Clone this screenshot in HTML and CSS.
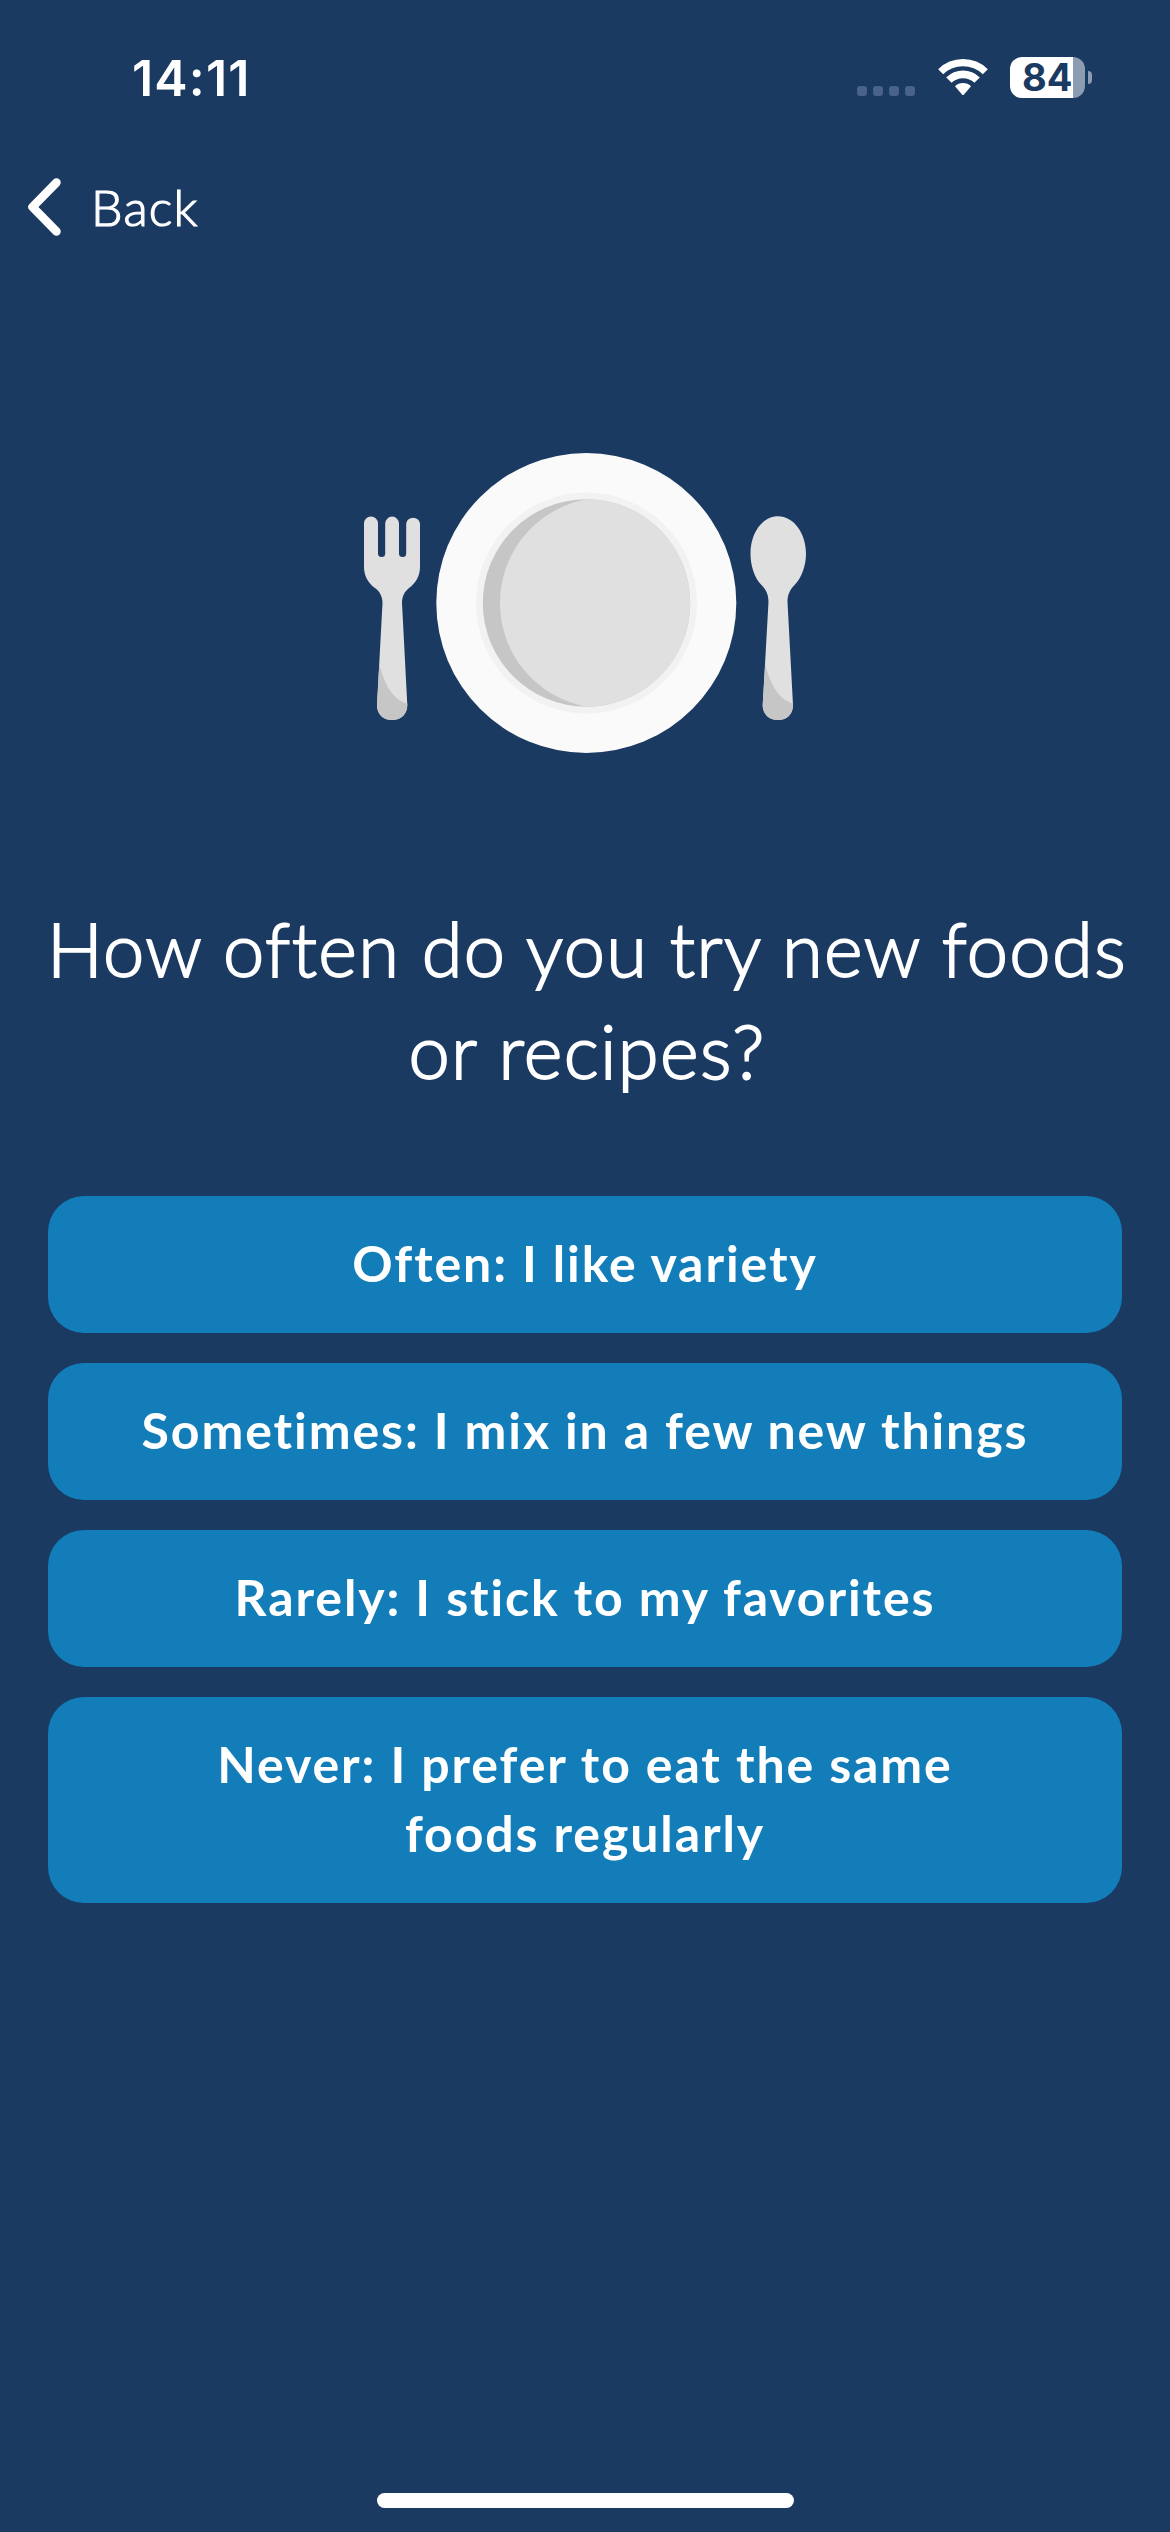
FILE: index.html
```html
<!DOCTYPE html>
<html lang="en">
<head>
  <meta charset="UTF-8" />
  <meta name="viewport" content="width=device-width, initial-scale=1.0" />
  <title>New Foods</title>
  <link rel="stylesheet" href="styles.css">
</head>
<body>
  <div class="status-bar">
    <span class="time">14:11</span>
    <div class="status-icons">
      <div class="signal"><i></i><i></i><i></i><i></i></div>
      <svg class="wifi" viewBox="0 0 52 38">
        <path d="M1.2 11.2 A35 35 0 0 1 50.8 11.2 L45.8 16.2 A28.5 28.5 0 0 0 6.2 16.2 Z" />
        <path d="M9.2 19.4 A24 24 0 0 1 42.8 19.4 L37.4 24.8 A16.4 16.4 0 0 0 14.6 24.800 Z" />
        <path d="M18 28.2 A11.4 11.4 0 0 1 34 28.2 L27 36.600 Q26 37.600 25 36.600 Z" />
      </svg>
      <div class="battery"><span>84</span></div>
      <div class="battery-tip"></div>
    </div>
  </div>

  <nav class="back">
    <svg viewBox="0 0 36 60">
      <path d="M30.5 5.5 L6.5 30 L30.5 54.5" />
    </svg>
    <span>Back</span>
  </nav>

  <main>
    <svg class="plate" viewBox="360 450 450 306">
      <!-- fork -->
      <path fill="#e0e0e0" d="M364 523.5 a7 7 0 0 1 14 0 V553.5 a3.6 3.6 0 0 0 7.2 0 V523.5 a6.9 6.9 0 0 1 13.8 0 V553.5 a3.6 3.6 0 0 0 7.2 0 V523.5 a7 7 0 0 1 13.8 0 V567 C420 576 415.5 583.5 409 588 C404.5 591.5 402 596.5 402 603 L407.3 705 C407.3 714 401 720 392 720 C383 720 377 714 377 705 L382.5 603 C382.5 596.5 379.5 591 375 588 C368.5 583.5 364 576 364 567 Z" />
      <path fill="#c6c6c6" d="M379.3 664 C384 684 393 700 407.3 703.5 V705 C407.3 714 401 720 392 720 C383 720 377 714 377 705 Z" />
      <!-- plate -->
      <circle cx="586.3" cy="603" r="150" fill="#fafafa" />
      <circle cx="586.5" cy="603" r="110.5" fill="#f2f2f2" />
      <circle cx="586.5" cy="603" r="103.7" fill="#c6c6c6" />
      <path fill="#e0e0e0" d="M586.5 499.3 A105.4 105.4 0 0 0 586.5 706.7 A103.7 103.7 0 0 0 586.5 499.3 Z" />
      <!-- spoon -->
      <path fill="#e0e0e0" d="M778 516.3 C793.5 516.3 806 533 806 553.5 C806 566 801.5 578 794.5 585 C790 589.5 787.5 594.5 787.5 602 L793 705 C793 714 787 720 778 720 C769 720 762.7 714 762.7 705 L768.5 602 C768.5 594.5 766 589.5 761.5 585 C754.5 578 750.5 566 750.5 553.5 C750.5 533 762.5 516.3 778 516.3 Z" />
      <path fill="#c6c6c6" d="M765.2 664 C770 684 779 700 793 703.5 V705 C793 714 787 720 778 720 C769 720 762.7 714 762.7 705 Z" />
    </svg>

    <h1>How often do you try new foods<br>or recipes?</h1>

    <div class="options">
      <button>Often: I like variety</button>
      <button>Sometimes: I mix in a few new things</button>
      <button>Rarely: I stick to my favorites</button>
      <button>Never: I prefer to eat the same<br>foods regularly</button>
    </div>
  </main>

  <div class="home-indicator"></div>
</body>
</html>
```
FILE: styles.css
```css
:root {
  --background-color: #1a3a62;
  --button-color: #127db9;
  --text-color: #ffffff;
}
* {
  margin: 0;
  padding: 0;
  box-sizing: border-box;
}
body {
  display: flex;
  flex-direction: column;
  height: 2532px;
  background-color: var(--background-color);
  color: var(--text-color);
  font-family: Lato, sans-serif;
}
.status-bar {
  display: flex;
  justify-content: space-between;
  height: 156px;
  padding: 57px 78px 0 132px;
}
.time {
  font-family: Inter, sans-serif;
  font-size: 50px;
  font-weight: 600;
  line-height: 42px;
  letter-spacing: 1.2px;
}
.status-icons {
  display: flex;
  height: 41px;
}
.signal {
  display: flex;
  gap: 6px;
  margin-top: 29px;
}
.signal i {
  width: 10px;
  height: 10px;
  border-radius: 3px;
  background: #48628a;
}
.wifi {
  width: 52px;
  height: 38px;
  margin: 1px 21px 0 22px;
  fill: var(--text-color);
}
.battery {
  width: 75px;
  height: 41px;
  padding-left: 12px;
  border-radius: 12px;
  background: linear-gradient(to right, #fff 63px, #8c9cb2 63px);
  color: var(--background-color);
  font-family: Inter, sans-serif;
  font-size: 38px;
  font-weight: 700;
  line-height: 41px;
}
.battery-tip {
  width: 4px;
  height: 13px;
  margin: 14px 0 0 3px;
  border-radius: 0 4px 4px 0;
  background: #8c9cb2;
}
.back {
  display: flex;
  align-items: center;
  height: 102px;
  padding-left: 26px;
  font-size: 50px;
  font-weight: 300;
  letter-spacing: 1.2px;
  -webkit-text-stroke: 1.2px var(--text-color);
}
.back svg {
  width: 36px;
  height: 60px;
  margin-right: 29px;
  fill: none;
  stroke: var(--text-color);
  stroke-width: 8.5;
  stroke-linecap: round;
  stroke-linejoin: round;
}
main {
  flex: 1;
  padding: 192px 48px 0;
}
.plate {
  display: block;
  width: 450px;
  height: 306px;
  margin: 0 auto;
}
h1 {
  margin: 142px -12px 0 -8px;
  font-size: 74px;
  font-weight: 300;
  line-height: 102px;
  letter-spacing: 1.35px;
  text-align: center;
  white-space: nowrap;
  -webkit-text-stroke: 1.8px var(--text-color);
}
.options {
  display: flex;
  flex-direction: column;
  gap: 30px;
  margin-top: 94px;
}
.options button {
  padding: 33px 40px 35px;
  border: none;
  border-radius: 36px;
  background-color: var(--button-color);
  color: var(--text-color);
  font-family: inherit;
  font-size: 50px;
  font-weight: 700;
  line-height: 69px;
  letter-spacing: 1.9px;
  cursor: pointer;
}
.home-indicator {
  width: 417px;
  height: 15px;
  margin: 0 auto 24px;
  border-radius: 8px;
  background: #fff;
}
```
